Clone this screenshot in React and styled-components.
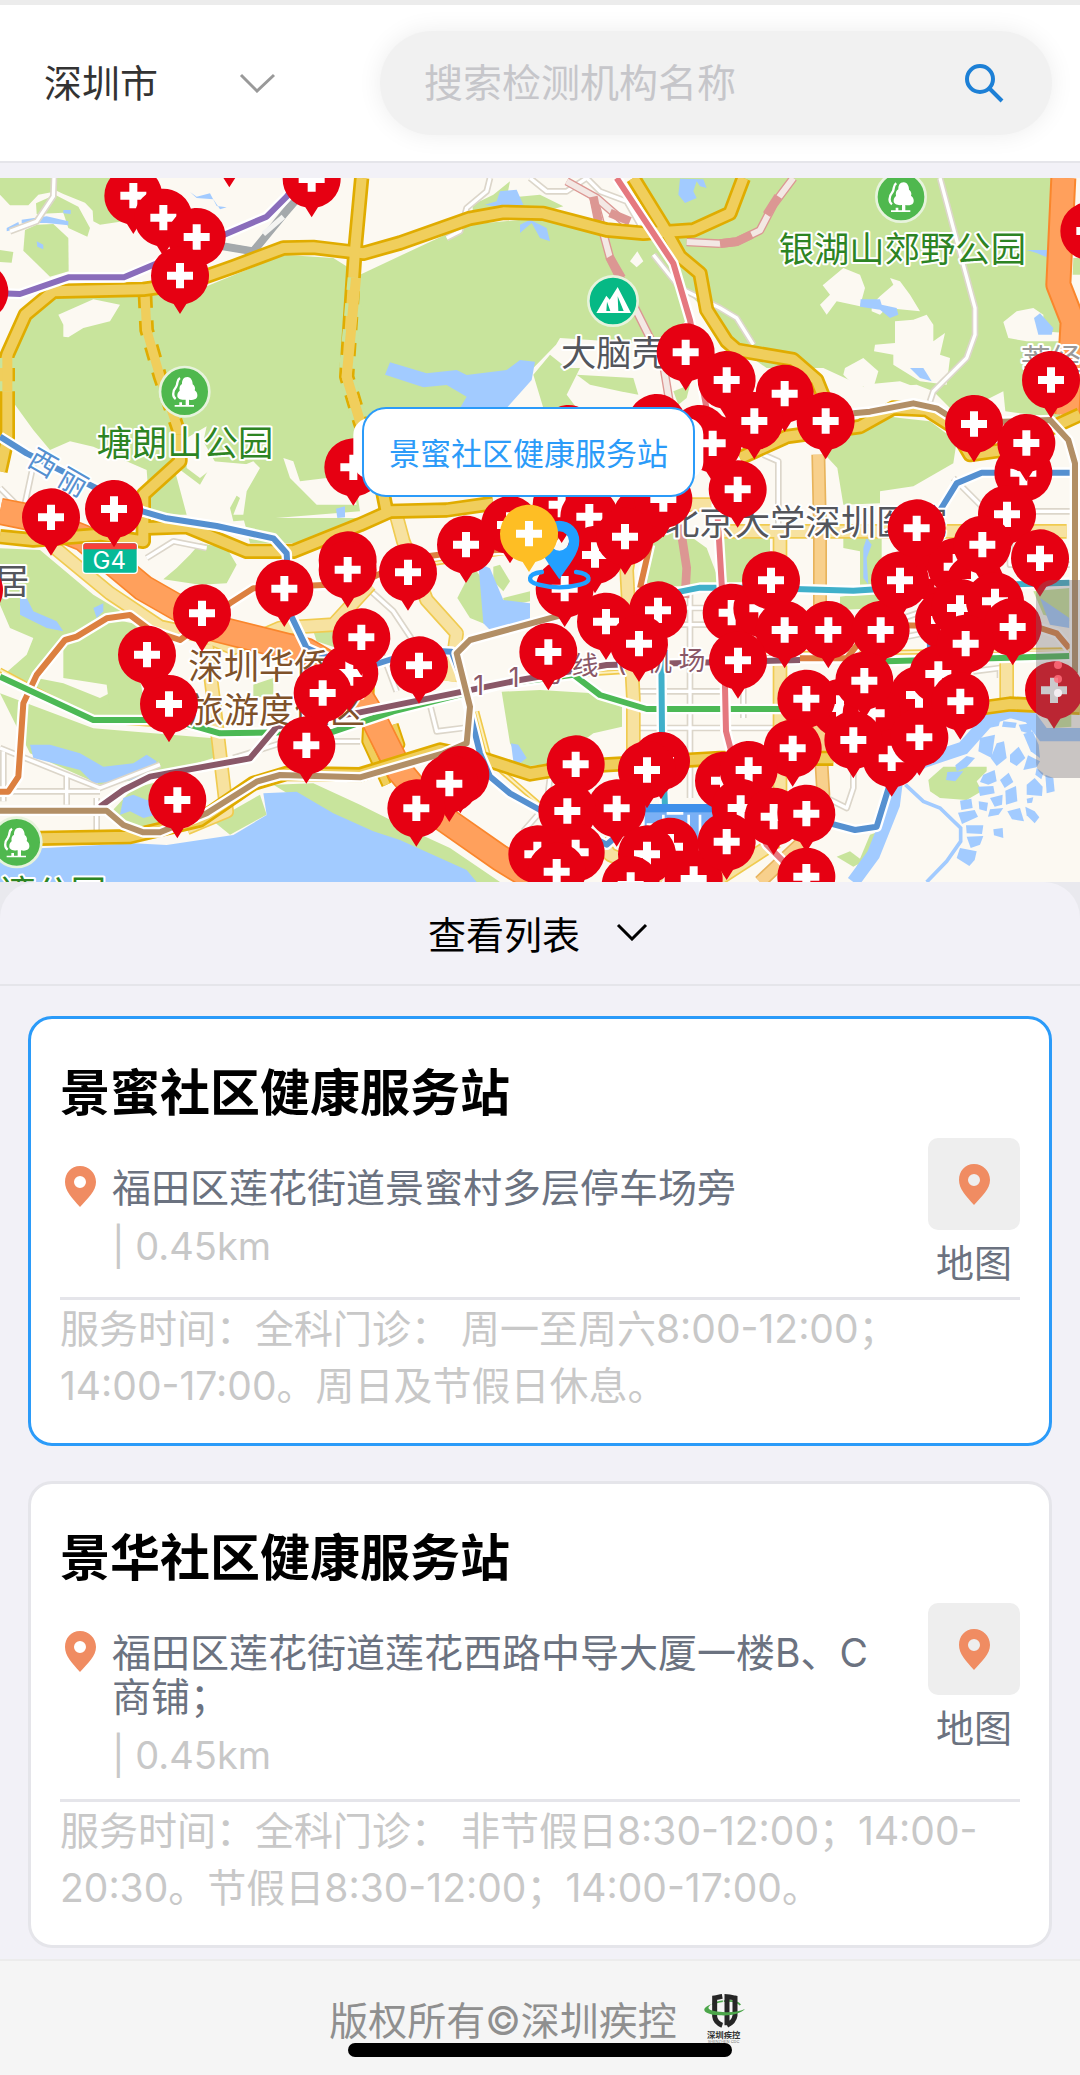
import React, { useState } from 'react';
import styled, { createGlobalStyle } from 'styled-components';


const GlobalStyle = createGlobalStyle`
  * {
    box-sizing: border-box;
  }

  body {
    margin: 0;
    background-color: #f2f1f7;
    font-family: Inter, "Noto Sans CJK SC", sans-serif;
    -webkit-font-smoothing: antialiased;
  }

  button, input, select {
    font-family: inherit;
  }
`;

const Page = styled.div`
  display: flex;
  flex-direction: column;
  min-height: 100vh;
  overflow: hidden;
`;

const Header = styled.header`
  display: flex;
  align-items: center;
  height: 163px;
  padding: 0 28px 0 44px;
  background-color: #fff;
  border-top: 5px solid #ececec;
  border-bottom: 2px solid #e5e5ea;
`;

const CityPicker = styled.label`
  display: grid;
  flex: none;
  align-items: center;
  width: 232px;
  margin-right: 104px;
`;

const CitySelect = styled.select`
  grid-area: 1 / 1;
  appearance: none;
  border: none;
  padding: 0;
  background: transparent;
  color: #333;
  font-size: 38px;
  line-height: 56px;
`;

const CityArrow = styled.svg`
  grid-area: 1 / 1;
  justify-self: end;
  pointer-events: none;
`;

const SearchBox = styled.form`
  display: flex;
  align-items: center;
  flex: 1;
  min-width: 0;
  height: 104px;
  padding: 0 48px 0 44px;
  border-radius: 52px;
  background-color: #f1f1f1;
  box-shadow: 0 0 24px #ededed;
`;

const SearchInput = styled.input`
  flex: 1;
  min-width: 0;
  padding: 0;
  border: none;
  outline: none;
  background: transparent;
  font-size: 39px;
  line-height: 56px;
  color: #333;

  &::placeholder {
    color: #c6c6ca;
    opacity: 1;
  }
`;

const IconButton = styled.button`
  display: flex;
  padding: 0;
  border: none;
  background: transparent;
  cursor: pointer;
`;

const MapArea = styled.section`
  position: relative;
  height: 704px;
  margin-top: 15px;
  overflow: hidden;
`;

const MapCanvas = styled.svg`
  display: block;
  width: 100%;
  height: 100%;
`;

const MapPopup = styled.div`
  position: absolute;
  top: 229px;
  left: calc(50% - 178px);
  padding: 3px 25px 0;
  border: 2px solid #2b9bf9;
  border-radius: 24px;
  background-color: #fff;
  color: #2b9bf9;
  font-size: 31px;
  line-height: 83px;
  white-space: nowrap;
`;

const SideHandle = styled.div`
  position: absolute;
  top: 402px;
  right: 0;
  display: flex;
  flex-direction: column;
  align-items: center;
  gap: 6px;
  width: 44px;
  height: 198px;
  padding-top: 81px;
  border-radius: 16px 0 0 16px;
  background-color: rgba(112, 104, 110, 0.36);
`;

const HandleDot = styled.span`
  width: 8px;
  height: 8px;
  border-radius: 50%;
  background-color: ${(props) => (props.$on ? '#f4eef2' : 'rgba(255, 110, 125, 0.85)')};
`;

const Sheet = styled.div`
  background-color: #e9e9ee;
`;

const SheetToggle = styled.button`
  display: flex;
  align-items: center;
  justify-content: center;
  gap: 36px;
  width: 100%;
  height: 104px;
  padding: 0 4px 2px 0;
  border: none;
  border-bottom: 2px solid #e5e5ea;
  border-radius: 36px 36px 0 0;
  background-color: #f2f1f7;
  color: #000;
  font-size: 38px;
  cursor: pointer;
`;

const List = styled.main`
  display: flex;
  flex-direction: column;
  gap: 35px;
  padding: 30px 28px 11px;
`;

const Card = styled.article`
  padding: 39px 29px 29px;
  border: 3px solid ${(props) => (props.$active ? '#2b9bf9' : '#e5e5ea')};
  border-radius: 24px;
  background-color: #fff;
`;

const CardTitle = styled.h2`
  margin: 0 0 10px;
  font-size: 50px;
  font-weight: 600;
  line-height: 70px;
  color: #000;
`;

const CardBody = styled.div`
  display: flex;
  justify-content: space-between;
  border-bottom: 3px solid #e5e5ea;
`;

const AddressBlock = styled.div`
  display: flex;
  gap: 15px;
  padding: 28px 0 16px 4px;

  svg {
    flex: none;
  }
`;

const Address = styled.p`
  max-width: 770px;
  margin: 0 0 8px;
  font-size: 39px;
  line-height: 44px;
  color: #6b7280;
`;

const Distance = styled.p`
  margin: 0;
  font-size: 38px;
  line-height: 56px;
  color: #c8c8c8;
`;

const MapLink = styled.button`
  display: flex;
  flex-direction: column;
  align-items: center;
  align-self: flex-start;
  gap: 12px;
  padding: 0 0 12px;
  border: none;
  background: transparent;
  color: #6b7280;
  font-size: 38px;
  line-height: 43px;
  cursor: pointer;
`;

const MapLinkIcon = styled.span`
  display: flex;
  align-items: center;
  justify-content: center;
  width: 92px;
  height: 92px;
  border-radius: 10px;
  background-color: #eee;
`;

const Hours = styled.p`
  margin: 0;
  font-size: 39px;
  line-height: 57px;
  color: #c8c8c8;
  white-space: pre-wrap;
`;

const Footer = styled.footer`
  display: flex;
  flex-direction: column;
  align-items: center;
  flex: 1;
  padding: 31px 0 18px;
  border-top: 2px solid #ececec;
  background-color: #f5f5f5;
`;

const Copyright = styled.div`
  display: flex;
  align-items: center;
  gap: 26px;
  height: 51px;
  padding-right: 6px;
  color: #8f8f8f;
  font-size: 39px;
`;

const HomeBar = styled.div`
  z-index: 1;
  width: 384px;
  height: 14px;
  border-radius: 7px;
  background-color: #000;
`;

const MapLabel = styled.text`
  font-size: ${(props) => props.$size || 106}px;
  fill: ${(props) => props.$color || '#54565c'};
  stroke: #fff;
  stroke-width: 12px;
  stroke-linejoin: round;
  paint-order: stroke;
`;

const clinics = [
  {
    id: 1,
    name: '景蜜社区健康服务站',
    address: '福田区莲花街道景蜜村多层停车场旁',
    distance: '0.45km',
    hours: '服务时间：全科门诊： 周一至周六8:00-12:00；\n14:00-17:00。周日及节假日休息。',
  },
  {
    id: 2,
    name: '景华社区健康服务站',
    address: '福田区莲花街道莲花西路中导大厦一楼B、C商铺；',
    distance: '0.45km',
    hours: '服务时间：全科门诊： 非节假日8:30-12:00；14:00-20:30。节假日8:30-12:00；14:00-17:00。',
  },
];

// Painted in this order, so later pins cover earlier ones
const pins = [
  [400, 53], [490, 119], [590, 177], [540, 293], [-62, 341], [935, 3], [688, -87],
  [153, 1018], [342, 993], [1060, 868], [1705, 768], [1970, 735], [2098, 768],
  [2057, 523], [2180, 606], [2354, 647], [2263, 729], [2477, 729], [2138, 796],
  [2213, 934], [2922, 738], [3153, 606], [3070, 884], [3079, 795],
  [3268, 159], [1530, 1041], [1685, 980], [1925, 1016], [1990, 963], [1768, 1016],
  [1785, 1131], [1875, 1076], [1398, 1100], [1694, 1232],
  [606, 1306], [853, 1232], [1043, 1147], [1043, 1175], [-78, 1236],
  [1048, 1485], [1084, 1378], [441, 1430], [507, 1578], [968, 1545], [919, 1702],
  [532, 1866], [1224, 1183], [1257, 1462], [1645, 1422],
  [1974, 1297], [1818, 1331], [1917, 1397], [1983, 1749], [1941, 1776], [1727, 1759],
  [1850, 1891], [1702, 1899], [1381, 1791], [1348, 1817], [1249, 1891],
  [1612, 2029], [1727, 2023], [1670, 2081], [2010, 2006], [1941, 2029], [1892, 2121],
  [2081, 2103], [2195, 1304], [2287, 1291], [2313, 1207], [2354, 1356], [2485, 1356],
  [2642, 1356], [2214, 1447], [2815, 1190], [2870, 1166],
  [2700, 1207], [2925, 1215], [3021, 1009], [2947, 1100], [2750, 1051], [3120, 1141],
  [2832, 1326], [2880, 1290], [2985, 1270], [3038, 1347], [2757, 1551],
  [2815, 1488], [2897, 1397], [2520, 1590], [2615, 1606], [2593, 1508], [2419, 1562],
  [2675, 1741], [2560, 1686], [2758, 1678], [2881, 1570], [2378, 1711],
  [2172, 1808], [2246, 1776], [2222, 1890], [2321, 1916], [2419, 1907],
  [2180, 1991], [2419, 2096], [3162, 1537],
];

const parks = [
  [554, 641],
  [2703, 57],
  [50, 1993],
];

const greens = [
  '0,0 158,0 158,42 115,50 85,82 30,82 0,50',
  '165,0 355,0 345,105 370,130 300,140 280,130 278,98 255,74 190,48 165,36',
  '75,156 110,140 160,138 205,180 206,280 150,296 70,218',
  '108,76 165,50 235,86 270,150 262,176 205,150 190,104 110,108',
  '0,216 40,222 35,254 0,252',
  '60,430 170,360 620,325 850,230 1000,240 1080,290 1400,140 1620,120 1960,190 2020,290 2065,420 1990,500 1680,480 1668,500 1600,570 1510,690 1380,760 1080,790 1060,868 1080,1000 700,1030 690,990 760,860 640,850 600,920 520,860 560,1010 450,1010 440,876 280,806 210,790 150,816 100,756 45,680 34,560',
  '1418,80 1480,50 1530,10 1520,60 1620,50 1690,85 1600,110 1418,100',
  '1600,590 1650,530 1700,570 1740,570 1700,650 1730,690 1630,690',
  '1730,590 1900,600 1915,650 1860,640 1770,620',
  '1900,0 3160,0 3145,330 3190,410 3180,720 3016,700 3010,640 2870,710 2800,640 2750,620 2600,630 2470,570 2300,570 2200,500 2100,380 1980,260',
  '2480,800 2600,705 2700,720 2790,730 2870,790 2860,856 2740,925 2640,940 2640,976 2530,980 2512,870 2475,830',
  '3220,240 3240,240 3240,290 3218,290',
  '2020,640 2070,620 2060,660 2035,680',
  '0,1111 120,1116 280,1250 390,1316 300,1340 200,1390 110,1500 190,1516 300,1560 420,1500 440,1620 280,1616 0,1500 80,1430 100,1380 30,1350 0,1280',
  '190,1380 320,1320 420,1340 430,1420 400,1500 440,1600 330,1600 320,1520 190,1500',
  '0,1546 80,1576 280,1651 640,1681 640,1740 450,1800 300,1820 90,1726',
  '570,1130 600,1096 680,1110 710,1160 680,1216 600,1220 490,1204 530,1170',
  '730,1020 1080,1020 1000,1060 880,1096 750,1096',
  '330,1906 400,1830 560,1790 500,1930 430,1960',
  '640,1930 780,1850 800,1910 690,1970',
  '820,1820 940,1816 1080,1880 1240,1960 1350,2010 1500,2112 1420,2112 1000,1930',
  '760,1520 820,1500 820,1550 760,1560',
  '940,1360 1010,1360 1010,1410 950,1390',
  '1505,1541 1620,1536 1780,1546 1866,1556 1866,1646 1780,1666 1700,1726 1670,1756 1570,1766 1530,1696',
  '1372,1260 1420,1166 1460,1220 1460,1340 1410,1320',
  '1480,1166 1500,1160 1530,1210 1510,1240 1480,1210',
  '1510,1260 1590,1240 1590,1270 1510,1286',
  '1960,1060 2050,1060 2120,1110 2160,1216 2140,1236 1940,1216',
  '2165,1060 2310,1060 2310,1226 2180,1216',
  '2530,1080 2645,1080 2645,1220 2580,1220 2580,1120 2530,1110',
  '2520,1256 2640,1240 2640,1290 2520,1296',
  '3100,1240 3208,1230 3208,1330 3130,1310',
  '2785,1806 2830,1766 2960,1766 2960,1780 2930,1810 2945,1840 2900,1866 2820,1860 2790,1840',
  '2510,2036 2550,2020 2590,2050 2560,2066',
  '2610,1970 2640,1960 2610,2060 2560,2090',
  '3130,1606 3214,1606 3214,1646 3160,1650',
];

const clearings = [
  '175,410 280,364 360,380 330,430 250,450 205,478 190,476 190,440',
  '850,840 880,850 900,910 980,900 1060,920 1070,980 950,980 900,930 870,900',
  '710,870 760,850 780,870 740,940 730,1010 700,1010 720,960 690,940',
  '560,780 620,745 610,790 650,860 600,900 560,870',
  '2468,322 2530,270 2580,290 2595,330 2580,385 2510,370 2480,410 2460,380 2490,350',
  '2640,355 2680,320 2670,300 2700,310 2730,350 2760,400 2660,390 2640,410 2615,400 2615,380',
  '2685,430 2740,425 2780,410 2800,440 2800,490 2835,465 2820,530 2850,540 2840,620 2760,610 2680,560 2680,530 2622,520 2625,500 2685,495',
  '2535,570 2590,540 2635,580 2620,630 2560,620 2530,590',
  '2590,620 2700,610 2780,640 2760,670 2600,660',
  '3010,432 3050,400 3100,390 3130,410 3130,460 3186,464 3180,490 3080,490 3025,480',
  '1890,250 1912,220 1930,250 1910,268',
];

const waters = [
  '1155,590 1170,553 1280,586 1370,576 1400,591 1520,576 1560,546 1605,551 1595,606 1520,690 1380,690 1400,656 1340,621 1270,628',
  '1455,80 1490,70 1500,40 1550,35 1570,80 1510,90',
  '1560,140 1590,125 1640,150 1650,190 1620,180 1595,135 1560,165',
  '2040,2 2110,4 2120,30 2100,25 2090,10 2080,40 2090,60 2055,75 2035,50',
  '2582,364 2640,364 2645,380 2690,390 2695,410 2670,420 2640,395 2580,386',
  '3102,420 3120,406 3160,450 3155,470 3115,470',
  '2730,570 2770,570 2795,610 2760,600',
  '3080,216 3145,216 3140,238 3110,225',
  '1008,992 1035,985 1035,1018 1012,1020',
  '60,1260 80,1260 100,1300 170,1330 190,1360 140,1350 60,1310',
  '280,1290 310,1276 310,1300 290,1320',
  '90,1700 150,1700 240,1726 310,1766 400,1756 440,1730 470,1750 450,1796 370,1810 280,1816 240,1776 100,1740',
  '370,1860 400,1850 440,1866 520,1860 510,1900 430,1920 390,1900 360,1910',
  '0,2011 120,2011 400,1996 500,2001 700,1971 800,1911 790,1846 890,1841 1000,1906 1120,1960 1200,1986 1400,2076 1430,2112 0,2112',
  '1435,1156 1470,1171 1510,1266 1590,1276 1590,1326 1470,1356 1450,1336',
  '1533,1696 1555,1700 1580,1740 1560,1756 1540,1750',
  '65,125 140,115 205,130 205,142 140,135 65,135',
  '190,96 212,96 212,108 190,106',
  '110,190 130,200 130,214 112,206',
  '570,42 590,56 630,46 650,84 680,88 660,94 640,64 590,60',
  '20,150 55,132 60,150 20,160',
  '2600,1080 2615,1100 2600,1140 2605,1220 2590,1200 2590,1110',
  '3120,1260 3150,1280 3208,1320 3208,1350 3150,1340',
];

// Fish ponds along the bay
const ponds = [
  '2968,1634 3000,1630 2996,1644 2966,1650',
  '3010,1630 3050,1634 3046,1650 3006,1646',
  '3056,1640 3100,1636 3092,1668 3064,1660',
  '2940,1680 2985,1670 2975,1740 2935,1720',
  '2990,1696 3012,1690 3020,1740 2990,1764 2972,1740',
  '3030,1730 3056,1706 3076,1740 3050,1764 3030,1752',
  '3084,1732 3120,1750 3110,1768 3070,1776',
  '3070,1668 3098,1660 3116,1700 3120,1740 3092,1720',
  '2866,1762 2900,1734 2925,1740 2900,1768 2870,1780',
  '2842,1782 2890,1780 2866,1810 2838,1806',
  '2950,1790 2984,1776 2990,1810 2965,1820 2940,1812',
  '2934,1826 2980,1824 2984,1846 2940,1854',
  '3000,1806 3026,1784 3040,1812 3014,1830',
  '3016,1838 3048,1824 3052,1870 3018,1880',
  '2970,1860 3008,1850 3006,1880 2984,1886',
  '3080,1820 3104,1800 3128,1826 3126,1854 3080,1850',
  '3110,1770 3130,1786 3124,1804 3106,1790',
  '3136,1790 3160,1800 3164,1840 3140,1846',
  '2880,1868 2914,1862 2918,1890 2884,1896',
  '2874,1904 2924,1896 2934,1916 2886,1938',
  '2898,1942 2950,1942 2946,1968 2900,1966',
  '2900,1976 2950,1974 2940,2000 2912,2010',
  '2880,2010 2930,2020 2924,2046 2908,2064 2870,2040',
  '3022,1900 3060,1890 3072,1930 3036,1924',
  '3076,1886 3104,1900 3118,1918 3104,1936 3080,1912',
  '2980,1954 3008,1950 3010,1980 2982,1972',
  '2936,1870 2964,1874 2960,1900 2938,1894',
  '2970,1894 3010,1890 2996,1910 2964,1916',
  '3080,1862 3100,1858 3096,1874 3082,1876',
];

const smallRoads = [
  '162,0 160,55 110,130 30,160',
  '1470,0 1460,40 1400,90 1380,160 1340,180',
  '1590,0 1640,40 1700,40 1760,0 1800,40 1880,70 1920,140',
  '1960,230 2040,330 2160,390 2210,420 2260,500',
  '2820,0 2860,150 2925,390 2925,470 2900,540 2800,640 2790,670',
  '0,1710 200,1790 300,1830 480,1760',
  '10,1720 10,1870',
  '200,1790 200,1880',
  '30,1840 300,1840',
  '290,1860 290,2000',
  '0,930 70,1000 100,860',
  '440,1140 520,1090 620,1110',
  '700,1740 860,1690 1080,1690',
  '1080,1210 1180,1300 1260,1420',
  '1120,1380 1160,1460 1190,1540',
  '1290,1580 1310,1660 1390,1650',
  '1570,1960 1640,1880 1650,1800',
  '1900,1540 2160,1540',
  '1900,1340 2160,1340',
  '1920,1290 2160,1290',
  '1900,1650 2160,1650',
  '2070,1240 2070,1860',
  '2230,1440 2230,1620',
  '2190,1650 2330,1650',
  '2290,830 2335,850 2335,1060',
  '2860,900 2960,1000 3240,1000',
  '2560,1760 2560,1830 2540,1890 2480,1860',
  '2700,1380 2800,1360',
  '2710,1320 2800,1290',
  '2920,1480 3000,1470 3000,1500',
  '3030,1030 3030,1160 3210,1160',
];

const paleRoads = [
  '160,1106 330,1246 480,1346 620,1376 700,1410 840,1350 1000,1340 1110,1220',
  '620,1400 640,1560 680,1900 560,1950',
  '1190,1016 1210,1090 1280,1266 1370,1366 1350,1510',
  '1900,1060 1880,1176 1900,1560 1900,1790',
  '2160,1060 3200,1060',
  '2340,1060 2340,1440 2340,1900',
  '2020,980 2160,980',
  '3020,1440 3020,1580',
  '2160,2100 2330,1990',
  '1800,1990 1830,2030 1990,2100',
];

const thinRoads = [
  '0,1476 280,1626 620,1650',
  '1080,1610 1560,1500 1880,1480',
  '1430,1600 1470,1750 1620,1880',
  '2160,1430 3210,1416',
  '1980,1450 2160,1450',
  '1080,1190 1600,1110',
];

const yellowRoads = [
  '0,620 22,530 76,410 160,340 430,334 560,316 700,266 850,210 940,208 1090,226 1200,195 1410,121 1510,103 1630,106 1820,156 1930,166 2080,156 2190,106 2230,0',
  '22,540 22,780 0,880',
  '1085,0 1065,216 1040,596 1080,730 1140,900 1160,1000',
  '1900,0 1990,146 2040,236 2100,286 2120,396 2180,490 2210,516 2380,545 2450,606 2480,680',
  '2220,840 2360,776 2580,746 2680,690 2780,695 2860,746 2910,830 3010,816 3240,710',
  '0,1076 100,1086 300,1070 430,1090 430,1010 430,950 540,850 540,770',
  '440,1050 560,1046 740,1120 880,1120 1080,1040 1170,1000 1340,996 1480,976',
  '120,1981 390,1976 600,1926 760,1816 860,1786 1080,1790 1320,1716 1460,1746 1590,1788 1720,1766 2160,1741 2500,1741',
  '2900,1596 3030,1578 3240,1588',
];

const metroLines = [
  { color: '#8a6dbb', points: '0,346 60,348 205,298 372,298 530,231 800,116 860,56 900,0' },
  { color: '#5590d0', points: '0,776 80,826 300,936 430,1001 500,1021 650,1044 820,1081 860,1126 870,1306 920,1410 1080,1480 1120,1461 1260,1416 1355,1421 1380,1486 1440,1726 1470,1796 1530,1846 1620,1896 1820,2000 1900,1930' },
  { color: '#5590d0', points: '2670,1240 2830,981 2870,916 2945,884 3240,884' },
  { color: '#5590d0', points: '2490,1936 2565,1956 2630,1946 2670,1816 2790,1410 2780,1130' },
  { color: '#dc8040', points: '0,1841 25,1841 55,1796 70,1576 110,1491 195,1386 230,1376 320,1321 390,1311 450,1356 540,1386 690,1276 760,1231 1080,1216 1240,1140 1400,1120 1640,1110 1700,1040' },
  { color: '#dc8040', points: '2300,1441 2540,1441 2620,1340 3120,1350 3170,1366 3208,1411' },
  { color: '#dc8040', points: '1950,1100 1920,1230' },
  { color: '#4cb955', points: '0,1496 280,1626 520,1626 660,1666 1000,1661 1180,1600 1500,1520 1720,1490 1800,1551 1940,1593 2400,1593 2660,1450 3208,1434' },
  { color: '#8a5868', points: '300,1886 370,1836 450,1796 750,1741 830,1646 1080,1603 1560,1506 1820,1461 2400,1446' },
  { color: '#b28f66', points: '0,1898 320,1898 370,1941 430,1963 480,1963 620,1906 770,1811 840,1791 1080,1798 1330,1726 1400,1696 1410,1586 1370,1426 1410,1386 1690,1310' },
  { color: '#b28f66', points: '2560,706 2610,701 2740,676 2810,691 2880,736 3150,726 3205,786 3225,856 3225,1486' },
  { color: '#40b0ca', points: '1940,1260 2040,1241 2100,1229 2240,1229 2560,1238 2700,1229 3208,1214' },
  { color: '#40b0ca', points: '1984,1440 1986,1666 1995,1886' },
  { color: '#e5787f', points: '1850,0 2020,256 2070,426 2140,800 2170,1300 2178,1660 2230,1860 2300,2000 2360,2060' },
];

const LocationIcon = () => (
  <svg width="33" height="41" viewBox="0 0 33 41" aria-hidden="true">
    <path
      fill="#f08c62"
      fillRule="evenodd"
      d="M16 0C7 0 1 7 1 16C1 25 8 32 16 41C24 32 32 25 32 16C32 7 25 0 16 0ZM16 10A6 6 0 1 1 16 22A6 6 0 1 1 16 10Z"
    />
  </svg>
);

const CdcLogo = () => (
  <svg width="42" height="50" viewBox="0 0 126 150" role="img" aria-label="深圳疾控">
    <path fill="none" stroke="#4ca64a" strokeWidth="5" d="M28 34C55 20 100 20 112 36" />
    <path fill="none" stroke="#262626" strokeWidth="15" d="M58 10C48 12 42 14 35 15V70C36 82 46 92 58 97" />
    <path fill="none" stroke="#262626" strokeWidth="15" d="M72 97V11C82 12 90 14 96 15V68C94 82 84 91 72 97" />
    <path fill="none" stroke="#f5f5f5" strokeWidth="3" d="M61 0V106" />
    <path fill="#4ca64a" d="M28 32C-8 44-6 64 50 67C86 69 112 62 126 48C106 56 84 59 60 57C18 55 4 46 28 32Z" />
    <text x="12" y="136" fontSize="25" fontWeight="700" fill="#333">深圳疾控</text>
    <text x="14" y="150" fontSize="12" fill="#777">SHENZHEN CDC</text>
  </svg>
);

const Roads = ({ lines, casing, color, width, edge = 6 }) => (
  <g fill="none" strokeLinejoin="round">
    {lines.map((points) => (
      <polyline key={points} points={points} stroke={casing} strokeWidth={width + edge * 2} />
    ))}
    {lines.map((points) => (
      <polyline key={points} points={points} stroke={color} strokeWidth={width} />
    ))}
  </g>
);

const Shapes = ({ list, color }) => (
  <g fill={color}>
    {list.map((points) => (
      <polygon key={points} points={points} />
    ))}
  </g>
);

const Pin = ({ x, y, color = '#e60012' }) => (
  <g transform={`translate(${x} ${y})`}>
    <path fill={color} d="M-87 0A87 87 0 1 1 19 85L0 115L-19 85A87 87 0 0 1-87 0Z" />
    <path fill="#fff" d="M-12-38H12V-12H39V12H12V38H-12V12H-39V-12H-12Z" />
  </g>
);

const ParkIcon = ({ x, y }) => (
  <g transform={`translate(${x} ${y})`}>
    <circle r="74" fill="#4fb84e" stroke="#e7f3dc" strokeWidth="8" />
    <path
      fill="#fff"
      d="M8-44C20-44 24-30 24-22C32-16 32-8 30-4C40 2 42 20 30 23C24 26 18 25 13 24V40H28V45H-30V40H-16V32H-8V40H3V24C-8 26-24 22-22 10C-22 4-18 0-15-3C-17-12-14-20-8-23C-8-34-4-44 8-44Z"
    />
    <path fill="none" stroke="#fff" strokeWidth="7" d="M-14-41C-26-34-18-26-26-14C-38 0-36 16-27 22" />
  </g>
);

const ClinicMap = () => (
  <MapCanvas viewBox="0 0 3240 2112" preserveAspectRatio="xMidYMid slice" role="img" aria-label="检测机构地图">
    <rect width="3240" height="2112" fill="#fcf9f2" />
    <Shapes list={greens} color="#c8e49c" />
    <Shapes list={clearings} color="#fcf9f2" />
    <Shapes list={waters} color="#a2cbff" />
    <Shapes list={ponds} color="#a2cbff" />
    <polyline
      points="2560,2112 2620,2030 2680,1880 2690,1800 2770,1750 2890,1710 2970,1620 3030,1600 3090,1616 3130,1670 3240,1670"
      fill="none"
      stroke="#a2cbff"
      strokeWidth="40"
    />
    <polyline
      points="2716,1820 2770,1870 2820,1890 2882,1950 2882,1990 2840,2050 2780,2112"
      fill="none"
      stroke="#a2cbff"
      strokeWidth="11"
    />

    <Roads lines={smallRoads} casing="#dcd6ca" color="#fff" width={10} edge={5} />
    <Roads lines={['520,180 760,220 850,110 910,40']} casing="#a4a9ac" color="#a4a9ac" width={20} edge={2} />
    <polyline points="790,168 850,116" stroke="#f4f4f2" strokeWidth="16" />
    <Roads
      lines={['1700,10 1790,60 1870,130', '1780,56 1830,240 1920,420 1990,560 2010,680', '2160,197 2210,191 2280,157 2320,80 2380,0', '2060,192 2160,197']}
      casing="#dc9793"
      color="#f3e8e4"
      width={18}
      edge={4}
    />
    <g fill="none" stroke="#dc9793" strokeWidth="26">
      <polyline points="1780,56 1795,130" />
      <polyline points="1828,236 1865,300" />
      <polyline points="2160,197 2210,191 2255,170" />
      <polyline points="2300,110 2335,55" />
      <polyline points="1830,105 1890,130" />
      <polyline points="2055,1260 2060,1170 2040,1040" />
    </g>
    <Roads lines={thinRoads} casing="#f0c94a" color="#fcf0c0" width={6} edge={5} />
    <Roads lines={paleRoads} casing="#f0cb50" color="#f7e2a0" width={34} edge={5} />
    <Roads
      lines={['2455,830 2460,1060 2460,1290', '2455,1600 2470,1850 2420,1980 2280,2112']}
      casing="#e8b45c"
      color="#f8d08c"
      width={32}
      edge={5}
    />
    <Roads lines={['1110,1500 1100,1690 1160,1820', '1180,1640 1200,1700 1130,1780']} casing="#e0ac00" color="#f0ce5c" width={20} />
    <Roads lines={['0,1000 100,1020 250,1080 430,1230 640,1350 920,1420 1040,1490 1120,1620 1200,1780 1300,1900 1500,2040 1680,2150']} casing="#fa862c" color="#ffa05c" width={72} edge={5} />
    <Roads lines={['3190,0 3175,320 3218,430 3202,710']} casing="#fa862c" color="#ffa05c" width={66} edge={6} />
    <polyline points="435,350 440,456 480,596 540,770 540,840" fill="none" stroke="#e0ac00" strokeWidth="44" strokeDasharray="40 38" />
    <polyline points="435,350 440,456 480,596 540,770 540,840" fill="none" stroke="#f0ce5c" strokeWidth="28" />
    <Roads lines={yellowRoads} casing="#e0ac00" color="#f0ce5c" width={30} edge={8} />
    <polyline points="1068,300 1040,596 1080,730" fill="none" stroke="#c8e49c" strokeWidth="50" strokeDasharray="38 40" />
    <polyline points="1068,300 1040,596 1080,730" fill="none" stroke="#f0ce5c" strokeWidth="30" />
    <polyline points="22,540 22,640" fill="none" stroke="#c8e49c" strokeWidth="50" strokeDasharray="30 40" />
    <polyline points="22,530 22,640" fill="none" stroke="#f0ce5c" strokeWidth="30" />

    <g fill="none" strokeLinejoin="round">
      {metroLines.map((line) => (
        <g key={line.points}>
          <polyline points={line.points} stroke="#fff" strokeWidth="32" />
          <polyline points={line.points} stroke={line.color} strokeWidth="18" />
        </g>
      ))}
    </g>
    <path fill="#7ab0f5" stroke="#fff" strokeWidth="8" d="M1930 1900H2200V2000H1930Z" />
    <path fill="#3f90ea" d="M1920 1878H2230V1904H1920Z" />
    <path fill="none" stroke="#fff" strokeWidth="8" d="M1990 1910V1990M2066 1910V1990M2100 1910V1990M1940 1940H1980M2000 1906H2050" />

    {parks.map(([x, y]) => (
      <ParkIcon key={x} x={x} y={y} />
    ))}
    <g transform="translate(1839 369)">
      <circle r="74" fill="#06b985" stroke="#e7f3dc" strokeWidth="8" />
      <path fill="#fff" d="M-50 36L-20-16L-10-4L14-42L54 36ZM-20 30L-8 30L-18 2ZM16 30H32L14-14Z" fillRule="evenodd" />
    </g>

    <g>
      <rect x="248" y="1094" width="164" height="92" rx="10" fill="#06ba97" stroke="#fff" strokeWidth="4" />
      <path fill="#f8403a" d="M250 1114V1104Q250 1096 258 1096H402Q410 1096 410 1104V1114Z" />
      <text x="328" y="1174" fontSize="72" fill="#fff" textAnchor="middle">G4</text>
    </g>
    <MapLabel x="290" y="834" $color="#2d8423">塘朗山公园</MapLabel>
    <MapLabel x="2336" y="251" $color="#2d8423">银湖山郊野公园</MapLabel>
    <MapLabel x="1683" y="563">大脑壳</MapLabel>
    <MapLabel x="1992" y="1071">北京大学深圳医院</MapLabel>
    <MapLabel x="-18" y="1249">居</MapLabel>
    <MapLabel x="565" y="1503" $color="#7f522a">深圳华侨城</MapLabel>
    <MapLabel x="565" y="1636" $color="#7f522a">旅游度假区</MapLabel>
    <MapLabel x="0" y="2184" $color="#2d8423">湾公园</MapLabel>
    <MapLabel x="3062" y="576" $size={90} $color="#999">莘经</MapLabel>
    <MapLabel transform="translate(78 860) rotate(30)" $size={84} $color="#5590d0">西</MapLabel>
    <MapLabel transform="translate(168 918) rotate(30)" $size={84} $color="#5590d0">丽</MapLabel>
    <MapLabel transform="translate(262 972) rotate(30)" $size={84} $color="#5590d0">线</MapLabel>
    <MapLabel x="1420" y="1552" $size={80} $color="#8a5868">1</MapLabel>
    <MapLabel x="1526" y="1528" $size={80} $color="#8a5868">1</MapLabel>
    <MapLabel x="1616" y="1512" $size={80} $color="#8a5868">号</MapLabel>
    <MapLabel x="1715" y="1490" $size={80} $color="#8a5868">线</MapLabel>
    <MapLabel x="1850" y="1480" $size={80} $color="#8a5868">(</MapLabel>
    <MapLabel x="1936" y="1478" $size={80} $color="#8a5868">机</MapLabel>
    <MapLabel x="2036" y="1476" $size={80} $color="#8a5868">场</MapLabel>

    {pins.map(([x, y]) => (
      <Pin key={`${x}-${y}`} x={x} y={y} />
    ))}
    <rect x="1060" y="720" width="1050" height="182" rx="50" fill="#fff" />

    <path
      fill="#22a0ff"
      fillRule="evenodd"
      d="M1678 1204C1650 1160 1618 1128 1618 1088A60 60 0 0 1 1738 1088C1738 1128 1706 1160 1678 1204ZM1678 1060A29 29 0 1 0 1678 1118A29 29 0 1 0 1678 1060Z"
    />
    <path
      fill="none"
      stroke="#22a0ff"
      strokeWidth="13"
      strokeLinecap="round"
      d="M1626 1182C1580 1188 1580 1212 1616 1220C1654 1230 1702 1230 1740 1220C1776 1212 1776 1188 1728 1182"
    />
    <Pin x={1587} y={1067} color="#febe24" />
  </MapCanvas>
);

const ClinicCard = ({ clinic, active }) => (
  <Card $active={active}>
    <CardTitle>{clinic.name}</CardTitle>
    <CardBody>
      <AddressBlock>
        <LocationIcon />
        <div>
          <Address>{clinic.address}</Address>
          <Distance>| {clinic.distance}</Distance>
        </div>
      </AddressBlock>
      <MapLink type="button">
        <MapLinkIcon>
          <LocationIcon />
        </MapLinkIcon>
        地图
      </MapLink>
    </CardBody>
    <Hours>{clinic.hours}</Hours>
  </Card>
);

const App = () => {
  const [city, setCity] = useState('深圳市');
  const [keyword, setKeyword] = useState('');
  const [open, setOpen] = useState(true);

  return (
    <Page>
      <GlobalStyle />
      <Header>
        <CityPicker>
          <CitySelect aria-label="城市" value={city} onChange={(e) => setCity(e.target.value)}>
            <option>深圳市</option>
          </CitySelect>
          <CityArrow width="37" height="20" viewBox="0 0 37 20" fill="none" stroke="#999" strokeWidth="3">
            <path d="M2 2L18 18L35 2" />
          </CityArrow>
        </CityPicker>
        <SearchBox onSubmit={(e) => e.preventDefault()}>
          <SearchInput
            aria-label="搜索检测机构名称"
            placeholder="搜索检测机构名称"
            value={keyword}
            onChange={(e) => setKeyword(e.target.value)}
          />
          <IconButton type="submit" aria-label="搜索">
            <svg width="40" height="40" viewBox="0 0 40 40" fill="none" stroke="#1d80d6" strokeWidth="4">
              <circle cx="16" cy="16" r="13" />
              <path d="M25 25L38 38" />
            </svg>
          </IconButton>
        </SearchBox>
      </Header>

      <MapArea>
        <ClinicMap />
        <MapPopup>景蜜社区健康服务站</MapPopup>
        <SideHandle>
          <HandleDot />
          <HandleDot />
          <HandleDot $on />
        </SideHandle>
      </MapArea>

      <Sheet>
        <SheetToggle type="button" onClick={() => setOpen(!open)}>
          查看列表
          <svg width="32" height="18" viewBox="0 0 32 18" fill="none" stroke="#000" strokeWidth="3">
            <path d="M2 2L16 16L30 2" />
          </svg>
        </SheetToggle>
      </Sheet>
      {open && (
        <List>
          {clinics.map((clinic) => (
            <ClinicCard key={clinic.id} clinic={clinic} active={clinic.id === 1} />
          ))}
        </List>
      )}

      <Footer>
        <Copyright>
          版权所有©深圳疾控
          <CdcLogo />
        </Copyright>
        <HomeBar />
      </Footer>
    </Page>
  );
};

export default App;
